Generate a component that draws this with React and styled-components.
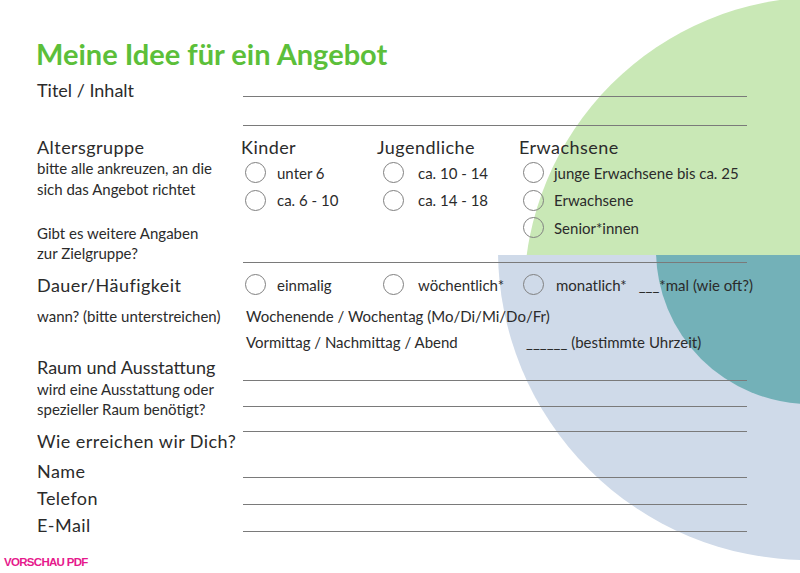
import styled, { createGlobalStyle } from "styled-components";

const GlobalStyle = createGlobalStyle`
  html, body {
    margin: 0;
    padding: 0;
    background: #ffffff;
  }
`;

// page + background shapes
const Page = styled.div`
  position: relative;
  width: 800px;
  height: 573px;
  overflow: hidden;
  background: #ffffff;
  font-family: Lato, "Liberation Sans", sans-serif;
  color: #2b2b2b;
`;

const Backdrop = styled.svg`
  position: absolute;
  left: 0;
  top: 0;
  z-index: 0;
`;

const Sheet = styled.div`
  position: relative;
  z-index: 1;
  padding-top: 37px;
`;

const Form = styled.div`
  margin-left: 37px;
  width: 710px;
`;

const Title = styled.h1`
  margin: 0 0 0 -1px;
  font-size: 29px;
  line-height: 34px;
  font-weight: 700;
  color: #5cbf3a;
`;

// rows
const Row = styled.div`
  display: grid;
  grid-template-columns: 204px 506px;
  height: ${(p) => p.$h}px;
  align-items: ${(p) => p.$align || "end"};
`;

const Block = styled.div`
  display: grid;
  grid-template-columns: 204px 506px;
  box-sizing: border-box;
  height: ${(p) => p.$h}px;
  padding-top: ${(p) => p.$top || 0}px;
`;

const Label = styled.div`
  font-size: 18px;
  line-height: 22px;
  letter-spacing: ${(p) => (p.$tight ? 0 : 0.45)}px;
  margin-top: ${(p) => p.$mt || 0}px;
  white-space: nowrap;
`;

const Small = styled.div`
  font-size: 15px;
  line-height: ${(p) => p.$lh || 20}px;
  margin-top: ${(p) => p.$mt || 0}px;
  margin-bottom: ${(p) => p.$mb || 0}px;
  white-space: nowrap;
`;

const Rule = styled.div`
  border-bottom: 1px solid #7a7a7a;
  margin: 0 0 4px 2px;
`;

const RuleLine = styled.div`
  box-sizing: border-box;
  height: ${(p) => p.$h}px;
  border-bottom: 1px solid #7a7a7a;
  margin-left: 2px;
`;

const LeftStack = styled.div`
  display: flex;
  flex-direction: column;
  justify-content: space-between;
`;

const RightStack = styled.div`
  display: flex;
  flex-direction: column;
`;

// age groups / options
const Columns = styled.div`
  display: grid;
  grid-template-columns: 136px 142px 1fr;
`;

const RadioList = styled.div`
  margin-top: 1px;
`;

const Radio = styled.div`
  display: flex;
  align-items: center;
  gap: ${(p) => p.$gap ?? 11}px;
  height: 27.5px;
  padding-left: ${(p) => p.$pad ?? 4}px;
  font-size: 15px;
  white-space: nowrap;
`;

const Circle = styled.span`
  flex-shrink: 0;
  box-sizing: border-box;
  width: 21px;
  height: 21px;
  border: 1.3px solid #808080;
  border-radius: 50%;
`;

const Extra = styled.span`
  margin-left: 12px;
`;

const TextLine = styled.div`
  font-size: 15px;
  padding-left: 5px;
  white-space: nowrap;
`;

const TimeRow = styled.div`
  display: grid;
  grid-template-columns: 280px auto;
  font-size: 15px;
  padding-left: 5px;
  white-space: nowrap;
`;

const Footer = styled.div`
  margin-top: 20px;
  padding-left: 4px;
  font-family: "Liberation Sans", Arial, sans-serif;
  font-weight: 700;
  font-size: 11.5px;
  line-height: 13px;
  letter-spacing: -0.7px;
  color: #e6198c;
`;

const ageGroups = [
  { title: "Kinder", pad: 4, gap: 11, items: ["unter 6", "ca. 6 - 10"] },
  { title: "Jugendliche", pad: 6, gap: 14, items: ["ca. 10 - 14", "ca. 14 - 18"] },
  {
    title: "Erwachsene",
    pad: 4,
    gap: 10,
    items: ["junge Erwachsene bis ca. 25", "Erwachsene", "Senior*innen"],
  },
];

const Option = ({ children, pad, gap }) => (
  <Radio $pad={pad} $gap={gap}>
    <Circle />
    <span>{children}</span>
  </Radio>
);

const App = () => {
  return (
    <>
      <GlobalStyle />
      <Page>
        <Backdrop width="800" height="573" viewBox="0 0 800 573">
          <defs>
            <clipPath id="upper">
              <rect x="0" y="0" width="800" height="256" />
            </clipPath>
            <clipPath id="lower">
              <rect x="0" y="255" width="800" height="318" />
            </clipPath>
          </defs>
          <circle cx="822" cy="295" r="298" fill="#c9e8b6" clipPath="url(#upper)" />
          <g clipPath="url(#lower)">
            <circle cx="808" cy="250" r="310" fill="#cfdae9" />
            <circle cx="810" cy="250" r="154" fill="#73b1b8" />
          </g>
        </Backdrop>

        <Sheet>
          <Form>
            <Title>Meine Idee für ein Angebot</Title>

            {/* titel */}
            <Row $h={30}>
              <Label $tight>Titel / Inhalt</Label>
              <Rule />
            </Row>
            <Row $h={29}>
              <div />
              <Rule />
            </Row>

            {/* altersgruppe */}
            <Block $h={137} $top={6}>
              <LeftStack>
                <div>
                  <Label>Altersgruppe</Label>
                  <Small $lh={20.5}>
                    bitte alle ankreuzen, an die
                    <br />
                    sich das Angebot richtet
                  </Small>
                </div>
                <Small $mb={4}>
                  Gibt es weitere Angaben
                  <br />
                  zur Zielgruppe?
                </Small>
              </LeftStack>
              <RightStack>
                <Columns>
                  {ageGroups.map((group) => (
                    <div key={group.title}>
                      <Label>{group.title}</Label>
                      <RadioList>
                        {group.items.map((item) => (
                          <Option key={item} pad={group.pad} gap={group.gap}>
                            {item}
                          </Option>
                        ))}
                      </RadioList>
                    </div>
                  ))}
                </Columns>
                <Rule style={{ marginTop: "auto" }} />
              </RightStack>
            </Block>

            {/* dauer */}
            <Row $h={35} $align="center">
              <Label>Dauer/Häufigkeit</Label>
              <Columns>
                <Option pad={4}>einmalig</Option>
                <Option pad={6} gap={14}>
                  wöchentlich*
                </Option>
                <Option pad={4} gap={12}>
                  monatlich*
                  <Extra>___*mal (wie oft?)</Extra>
                </Option>
              </Columns>
            </Row>
            <Row $h={28} $align="center">
              <Small>wann? (bitte unterstreichen)</Small>
              <TextLine>Wochenende / Wochentag (Mo/Di/Mi/Do/Fr)</TextLine>
            </Row>
            <Row $h={24} $align="center">
              <div />
              <TimeRow>
                <span>Vormittag / Nachmittag / Abend</span>
                <span>______ (bestimmte Uhrzeit)</span>
              </TimeRow>
            </Row>

            {/* raum */}
            <Block $h={78} $top={2}>
              <div>
                <Label $tight>Raum und Ausstattung</Label>
                <Small $mt={1}>
                  wird eine Ausstattung oder
                  <br />
                  spezieller Raum benötigt?
                </Small>
              </div>
              <RightStack>
                <RuleLine $h={25} />
                <RuleLine $h={26} />
                <RuleLine $h={25} />
              </RightStack>
            </Block>

            {/* kontakt */}
            <Label $mt={-2}>Wie erreichen wir Dich?</Label>
            <Row $h={30}>
              <Label>Name</Label>
              <Rule />
            </Row>
            <Row $h={27}>
              <Label>Telefon</Label>
              <Rule />
            </Row>
            <Row $h={27}>
              <Label>E-Mail</Label>
              <Rule />
            </Row>
          </Form>
          <Footer>VORSCHAU PDF</Footer>
        </Sheet>
      </Page>
    </>
  );
};

export default App;
